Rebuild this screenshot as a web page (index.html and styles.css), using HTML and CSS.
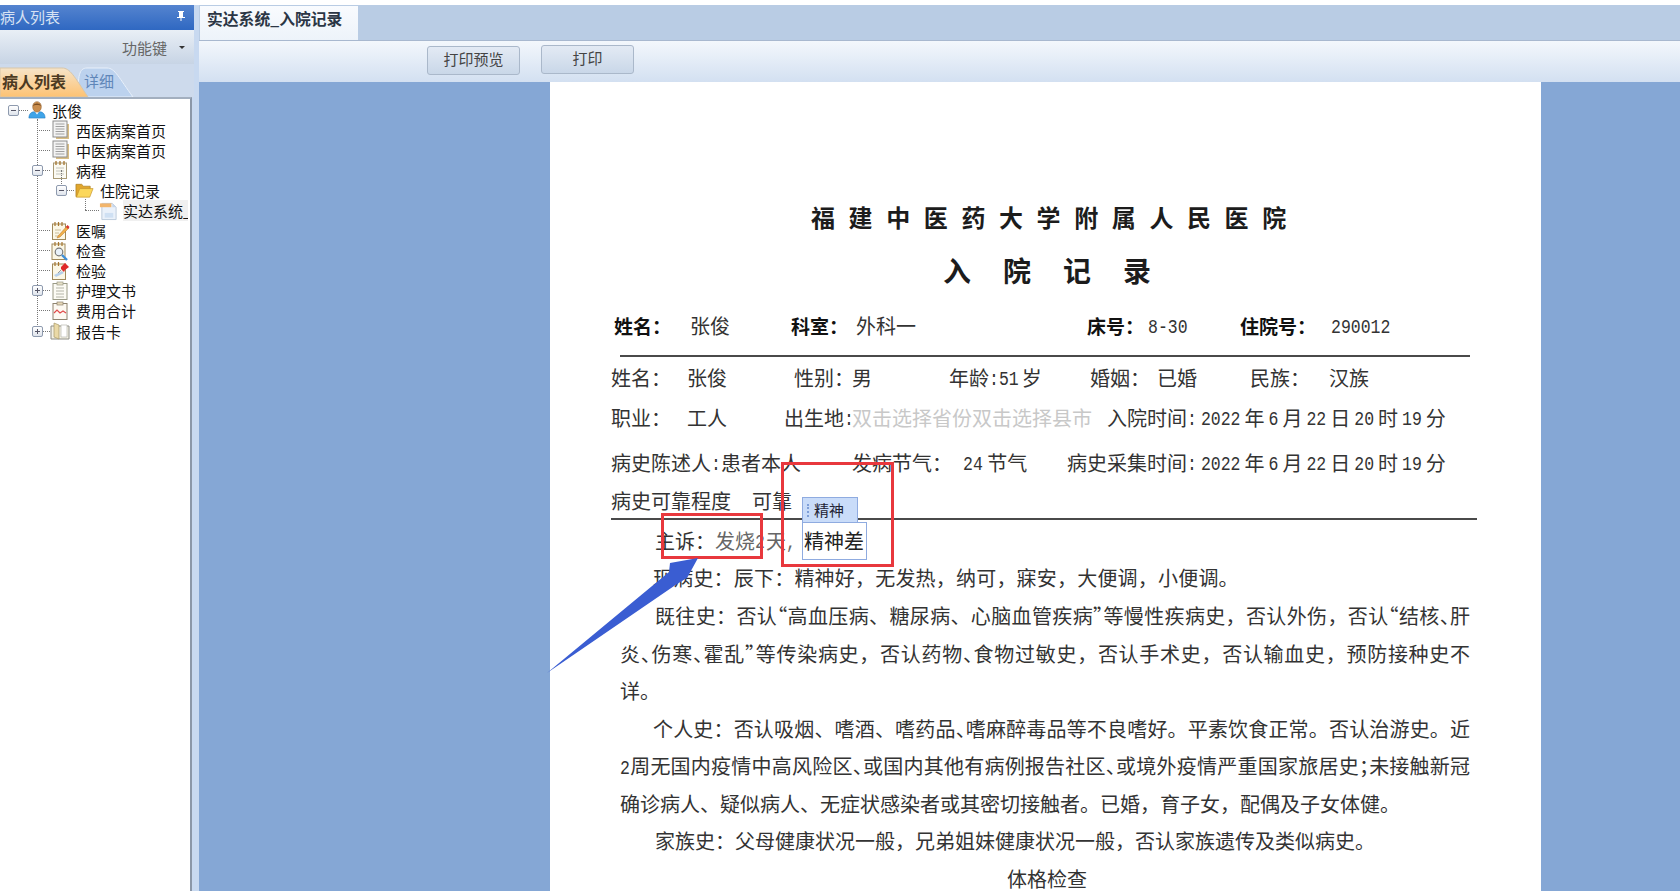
FILE: index.html
```html
<!DOCTYPE html>
<html lang="zh-CN">
<head>
<meta charset="utf-8">
<title>实达系统_入院记录</title>
<link rel="stylesheet" href="styles.css">
</head>
<body>
<svg class="defs" width="0" height="0" aria-hidden="true">
  <symbol id="i-user" viewBox="0 0 20 20">
    <path d="M1 19c0-5 3-7 6-7l3 2 3-2c3 0 6 2 6 7z" fill="#3fa4e8" stroke="#1f78c0" stroke-width=".6"/>
    <path d="M8 12.500h4l-2 2.500z" fill="#fff"/>
    <ellipse cx="10" cy="6.500" rx="4.800" ry="5.800" fill="#c98d4e" stroke="#8f5f2b" stroke-width=".6"/>
    <path d="M5.200 5.500c1-3.800 8.600-3.800 9.600 0-2-1.500-7.600-1.500-9.600 0z" fill="#7c4f22"/>
  </symbol>
  <symbol id="i-doc" viewBox="0 0 20 20">
    <path d="M7 4h12v15H6v-2h1z" fill="#d8bd84"/>
    <rect x="3" y="1" width="14" height="16" fill="#f3f3f3" stroke="#8d8d8d"/>
    <path d="M5.500 4h9M5.500 6.500h9M5.500 9h9M5.500 11.500h9M5.500 14h9" stroke="#a0a0a0"/>
  </symbol>
  <symbol id="i-note" viewBox="0 0 20 20">
    <rect x="3.500" y="3" width="13" height="15.500" fill="#fbfaf2" stroke="#a89a76"/>
    <path d="M6 1v4M10 1v4M14 1v4" stroke="#a5752e" stroke-width="1.300"/>
    <path d="M6 8h8M6 11h8M6 14h8" stroke="#c4c4bc"/>
  </symbol>
  <symbol id="i-folder" viewBox="0 0 20 20">
    <path d="M1 17V4h6l2 2h7v3H6L2 17z" fill="#e1a62d" stroke="#a87a1c" stroke-width=".7"/>
    <path d="M1.500 17.500l3.500-9h14l-3.500 9z" fill="#fbd75b" stroke="#c6942a" stroke-width=".7"/>
  </symbol>
  <symbol id="i-rec" viewBox="0 0 20 20">
    <path d="M3 2h11l4 4v13H3z" fill="#eaf1fa" stroke="#bcc9da"/>
    <path d="M14 2v4h4z" fill="#c6d6ea"/>
    <rect x="1" y="2" width="12" height="4" fill="#f2b56b"/>
    <path d="M6 12h9v5H6z" fill="#cfe0f3"/>
  </symbol>
  <symbol id="i-order" viewBox="0 0 20 20">
    <rect x="2.500" y="3" width="13" height="15.500" fill="#fbf7e6" stroke="#a08a5c"/>
    <path d="M5 1v4M8.500 1v4M12 1v4" stroke="#a5752e" stroke-width="1.200"/>
    <path d="M5 9h6M5 12h4M5 15h5" stroke="#c9bd9a"/>
    <path d="M8 15l9-10 2 2-9 9-3 1z" fill="#f0b04a" stroke="#b8752a" stroke-width=".5"/>
    <path d="M16 6l1.500-2 2 2-1.500 2z" fill="#d8332f"/>
  </symbol>
  <symbol id="i-check" viewBox="0 0 20 20">
    <rect x="2" y="3" width="13" height="15.500" fill="#fbf7e6" stroke="#a08a5c"/>
    <path d="M5 1v4M8.500 1v4M12 1v4" stroke="#a5752e" stroke-width="1.200"/>
    <circle cx="9" cy="11" r="3.800" fill="#e9f2fa" stroke="#777" stroke-width="1.200"/>
    <path d="M12 14l5 5" stroke="#3f8fd8" stroke-width="2.400"/>
  </symbol>
  <symbol id="i-test" viewBox="0 0 20 20">
    <rect x="2.500" y="3" width="13" height="15.500" fill="#fbf7e6" stroke="#a08a5c"/>
    <path d="M5 1v4M8.500 1v4" stroke="#a5752e" stroke-width="1.200"/>
    <path d="M4 14l8-4 2 2-8 4z" fill="#b7d0ea"/>
    <path d="M11 6l4-4 4 4-4 3-1 2-3-3z" fill="#df2a2a"/>
    <path d="M11 9l-3 3" stroke="#999"/>
  </symbol>
  <symbol id="i-clip" viewBox="0 0 20 20">
    <rect x="3" y="2.500" width="14" height="16" fill="#fcfbf4" stroke="#9a9a86"/>
    <rect x="7" y="1" width="6" height="3" fill="#e6e0c8" stroke="#9a9a86" stroke-width=".7"/>
    <path d="M6 7h8M6 10h8M6 13h8M6 16h8" stroke="#b4b4a8"/>
  </symbol>
  <symbol id="i-cost" viewBox="0 0 20 20">
    <rect x="3" y="2.500" width="14" height="16" fill="#fdf9f2" stroke="#8f8470"/>
    <rect x="7" y="1" width="6" height="3" fill="#e6d8b8" stroke="#8f8470" stroke-width=".7"/>
    <path d="M4 12l3-3 3 3 3-2 3 2" fill="none" stroke="#e04a4a" stroke-width="1.200"/>
  </symbol>
  <symbol id="i-book" viewBox="0 0 20 20">
    <path d="M1 5h18v13H1z" fill="#f4f1e4" stroke="#8e8e86"/>
    <path d="M4 2l5 2v14l-5-2z" fill="#ead9a6" stroke="#a89a6a" stroke-width=".7"/>
    <path d="M11 4h6v12h-6z" fill="#fff" stroke="#b8b8b0" stroke-width=".7"/>
  </symbol>
</svg>

<div class="app">
  <aside class="side">
    <div class="side-head">
      <span class="side-title">病人列表</span>
      <svg class="pin" width="12" height="12" viewBox="0 0 12 12"><path d="M3 1h6v1H8v5h2v1H6.500v3h-1V8H2V7h2V2H3z" fill="#fff"/></svg>
    </div>
    <div class="side-tools">
      <span class="tools-label">功能键</span>
      <span class="caret"></span>
    </div>
    <div class="side-tabs">
      <div class="stab stab-on">
        <svg class="stab-shape" width="90" height="33" viewBox="0 0 90 33"><defs><linearGradient id="tab-on" x1="0" y1="0" x2="0" y2="1"><stop offset="0" stop-color="#f6e4c8"/><stop offset="1" stop-color="#fdc273"/></linearGradient></defs><path d="M0 33V4h62c8 0 12 8 26 29z" fill="url(#tab-on)" stroke="#d8c6a8"/></svg>
        <span class="stab-text">病人列表</span>
      </div>
      <div class="stab stab-off">
        <svg class="stab-shape" width="62" height="33" viewBox="0 0 62 33"><path d="M1 33C1 12 2 4 10 4h20c8 0 12 10 26 29z" fill="#bcd2ee" stroke="#e8f0fa"/></svg>
        <span class="stab-text">详细</span>
      </div>
    </div>
    <div class="tree-wrap">
      <div class="tree">
        <div class="tree-row root">
          <span class="exp"><i class="minus"></i></span><span class="link link-root"></span>
          <svg class="ico ico-user"><use href="#i-user"/></svg><span class="lab lab-root">张俊</span>
        </div>
        <div class="tree-row l1"><span class="link"></span><svg class="ico"><use href="#i-doc"/></svg><span class="lab">西医病案首页</span></div>
        <div class="tree-row l1"><span class="link"></span><svg class="ico"><use href="#i-doc"/></svg><span class="lab">中医病案首页</span></div>
        <div class="tree-row l1"><span class="link"><span class="exp exp-over"><i class="minus"></i></span></span><svg class="ico"><use href="#i-note"/></svg><span class="lab">病程</span></div>
        <div class="tree-row l2"><span class="link"><span class="exp exp-over"><i class="minus"></i></span></span><svg class="ico"><use href="#i-folder"/></svg><span class="lab lab-l2">住院记录</span></div>
        <div class="tree-row l3"><span class="link"></span><svg class="ico"><use href="#i-rec"/></svg><span class="lab lab-sel">实达系统_入院记录</span></div>
        <div class="tree-row l1"><span class="link"></span><svg class="ico"><use href="#i-order"/></svg><span class="lab">医嘱</span></div>
        <div class="tree-row l1"><span class="link"></span><svg class="ico"><use href="#i-check"/></svg><span class="lab">检查</span></div>
        <div class="tree-row l1"><span class="link"></span><svg class="ico"><use href="#i-test"/></svg><span class="lab">检验</span></div>
        <div class="tree-row l1"><span class="link"><span class="exp exp-over"><i class="minus"></i><i class="plus"></i></span></span><svg class="ico"><use href="#i-clip"/></svg><span class="lab">护理文书</span></div>
        <div class="tree-row l1"><span class="link"></span><svg class="ico"><use href="#i-cost"/></svg><span class="lab">费用合计</span></div>
        <div class="tree-row l1"><span class="link"><span class="exp exp-over"><i class="minus"></i><i class="plus"></i></span></span><svg class="ico"><use href="#i-book"/></svg><span class="lab">报告卡</span></div>
      </div>
    </div>
  </aside>

  <main class="main">
    <div class="main-tabs"><div class="main-tab">实达系统_入院记录</div></div>
    <div class="main-tools">
      <button class="btn btn-preview">打印预览</button>
      <button class="btn btn-print">打印</button>
    </div>
    <div class="stage">
      <article class="page">
        <h1 class="t1">福建中医药大学附属人民医院</h1>
        <h2 class="t2">入院记录</h2>

        <div class="r r-head">
          <b class="w76">姓名：</b><span class="w101">张俊</span>
          <b class="w65">科室：</b><span class="w231">外科一</span>
          <b class="w61">床号：</b><span class="w92"><span class="m">8-30</span></span>
          <b class="w91">住院号：</b><span><span class="m">290012</span></span>
        </div>
        <div class="rule rule-a"></div>

        <div class="r mt2">
          <span class="w76">姓名：</span><span class="w107">张俊</span>
          <span class="w58">性别：</span><span class="w97">男</span>
          <span class="w141">年龄<span class="m age">:51</span>岁</span>
          <span class="w67">婚姻：</span><span class="w93">已婚</span>
          <span class="w79">民族：</span><span>汉族</span>
        </div>
        <div class="r mt4">
          <span class="w76">职业：</span><span class="w97">工人</span>
          <span class="w68">出生地<span class="m">:</span></span><span class="w255 hint">双击选择省份双击选择县市</span>
          <span>入院时间<span class="m">:</span><span class="m n">2022</span>年<span class="m n">6</span>月<span class="m n">22</span>日<span class="m n">20</span>时<span class="m n">19</span>分</span>
        </div>
        <div class="r mt9">
          <span class="w241">病史陈述人<span class="m">:</span>患者本人</span>
          <span class="w111">发病节气：</span><span class="w104"><span class="m">24</span> 节气</span>
          <span>病史采集时间<span class="m">:</span><span class="m n">2022</span>年<span class="m n">6</span>月<span class="m n">22</span>日<span class="m n">20</span>时<span class="m n">19</span>分</span>
        </div>
        <div class="r mt2">
          <span class="w141">病史可靠程度</span><span>可靠</span>
        </div>
        <div class="rule rule-b"></div>

        <div class="r mt2 ind44">主诉：<span class="soft">发烧<span class="m n-sm">2</span>天<span class="m">,</span></span></div>
        <div class="r mt1 ind42 airy">现病史：辰下：精神好，无发热，纳可，寐安，大便调，小便调。</div>

        <div class="body">
          <p class="j ind-35">既往史：否认<span class="h">“</span>高血压病、糖尿病、心脑血管疾病<span class="h">”</span>等慢性疾病史，否认外伤，否认<span class="h">“</span>结核<span class="h">、</span>肝</p>
          <p class="j">炎<span class="h">、</span>伤寒<span class="h">、</span>霍乱<span class="h">”</span>等传染病史，否认药物<span class="h">、</span>食物过敏史，否认手术史，否认输血史，预防接种史不</p>
          <p>详。</p>
          <p class="j ind-33">个人史：否认吸烟、嗜酒、嗜药品<span class="h">、</span>嗜麻醉毒品等不良嗜好。平素饮食正常。否认治游史。近</p>
          <p class="j"><span class="m">2</span>周无国内疫情中高风险区<span class="h">、</span>或国内其他有病例报告社区<span class="h">、</span>或境外疫情严重国家旅居史<span class="h">；</span>未接触新冠</p>
          <p>确诊病人、疑似病人、无症状感染者或其密切接触者。已婚，育子女，配偶及子女体健。</p>
          <p class="ind-35">家族史：父母健康状况一般，兄弟姐妹健康状况一般，否认家族遗传及类似病史。</p>
          <p class="ind-387">体格检查</p>
        </div>
      </article>
    </div>
  </main>

  <div class="popup">
    <div class="popup-tag"><i class="grip"></i>精神</div>
    <div class="popup-box">精神差</div>
  </div>
  <div class="mark mark-a"></div>
  <div class="mark mark-b"></div>
  <svg class="arrow" width="160" height="125" viewBox="0 0 160 125"><polygon points="0,124 122,23 123,14 151,9 140,29 130,35" fill="#3a5dd2"/></svg>
</div>
</body>
</html>
```

FILE: styles.css
```css
* { box-sizing: border-box; }
html, body { margin: 0; padding: 0; height: 100%; overflow: hidden; background: #fff; }
body { font-family: "Noto Sans CJK SC", "Liberation Sans", sans-serif; color: #222; }
.defs { position: absolute; }

.app { position: relative; display: flex; height: 891px; padding-top: 5px; }

/* left panel */
.side { width: 199px; flex: none; display: flex; flex-direction: column; background: #c8d9f0; }
.side-head { height: 25px; flex: none; display: flex; align-items: center; justify-content: space-between; padding: 0 7px 3px 0; width: 194px; background: linear-gradient(#5584cf, #2f68c2); }
.side-title { font-size: 15px; color: #d7e2f3; }
.pin { display: block; }
.side-tools { height: 34px; flex: none; width: 194px; display: flex; align-items: center; justify-content: flex-end; padding-right: 9px; gap: 12px; background: linear-gradient(#e9eff6, #c7d4e5); }
.tools-label { font-size: 15px; color: #666; }
.caret { width: 0; height: 0; border-left: 3.500px solid transparent; border-right: 3.500px solid transparent; border-top: 3.500px solid #333; }
.side-tabs { height: 33px; flex: none; width: 194px; display: flex; background: #cddaec; }
.stab { position: relative; height: 33px; display: flex; align-items: center; }
.stab-shape { position: absolute; left: 0; top: 0; }
.stab-text { position: relative; }
.stab-on { width: 77px; z-index: 1; }
.stab-on .stab-text { font-size: 16px; font-weight: 700; color: #4b3a22; padding-left: 2px; }
.stab-off { width: 62px; }
.stab-off .stab-text { font-size: 15px; color: #5f86b8; padding-left: 7px; }

.tree-wrap { flex: 1; width: 192px; background: #fff; border-right: 2px solid #8b97a8; border-top: 2px solid #a3afbf; overflow: hidden; }
.tree { position: relative; padding-top: 1px; }
.tree::before { content: ""; position: absolute; left: 37px; top: 20px; height: 212px; border-left: 1px dotted #777; }
.tree-row { position: relative; display: flex; align-items: center; height: 20.100px; font-size: 15px; color: #111; white-space: nowrap; }
.root { padding-left: 8px; }
.l1 { padding-left: 37px; }
.l2 { padding-left: 61px; }
.l3 { padding-left: 85px; }
.l2::before { content: ""; position: absolute; left: 61px; top: -10px; height: 20px; border-left: 1px dotted #777; }
.l3::before { content: ""; position: absolute; left: 85px; top: -1px; height: 11px; border-left: 1px dotted #777; }
.link { position: relative; flex: none; width: 13px; height: 1px; border-top: 1px dotted #777; }
.link-root { width: 9px; }
.l3 .link { width: 14px; }
.exp { position: relative; flex: none; width: 11px; height: 11px; border: 1px solid #8e9aae; border-radius: 2px; background: linear-gradient(#fff, #dfe4ec); }
.exp-over { position: absolute; left: -5px; top: -6px; }
.minus, .plus { position: absolute; background: #556; }
.minus { left: 2px; top: 4px; width: 5px; height: 1px; }
.plus { left: 4px; top: 2px; width: 1px; height: 5px; }
.ico { flex: none; width: 20px; height: 20px; }
.ico-user { width: 18px; }
.lab { margin-left: 6px; }
.lab-root { margin-left: 6px; }
.lab-l2 { margin-left: 6px; }
.l2 .ico { margin-left: 1px; width: 19px; }
.l3 .ico { width: 19px; }
.lab-sel { margin-left: 5px; width: 65px; overflow: hidden; background: #f0f0f0; }

/* main area */
.main { flex: 1; min-width: 0; display: flex; flex-direction: column; }
.main-tabs { height: 35px; flex: none; padding: 1px 0 0 1px; background: #b9cce4; }
.main-tab { width: 158px; height: 34px; padding: 0 0 0 7px; font-size: 15.800px; font-weight: 700; color: #2b3645; line-height: 26px; background: linear-gradient(#f9fbfe, #edf3fa); }
.main-tools { height: 42px; flex: none; display: flex; align-items: flex-start; padding-top: 4px; border-top: 1px solid #a8b8cf; background: linear-gradient(#f3f7fc, #d3e0f1); }
.btn { width: 93px; height: 29px; padding: 0 0 5px; border: 1px solid #aab8ca; border-radius: 3px; background: linear-gradient(#e3eaf4, #c9d7e8); font-family: inherit; font-size: 15px; color: #444; }
.btn-preview { margin-left: 228px; margin-top: 1px; }
.btn-print { margin-left: 21px; }
.stage { flex: 1; min-height: 0; padding-left: 351px; background: #85a7d5; overflow: hidden; }

/* record page */
.page { width: 991px; height: 100%; padding: 118px 0 0 61px; background: #fff; overflow: hidden; font-size: 20px; color: #333; }
.t1 { margin: 0 0 0 200px; height: 34px; line-height: 34px; font-size: 24px; font-weight: 700; letter-spacing: 13.600px; white-space: nowrap; color: #1c1c1c; }
.t2 { margin: 16px 0 0 332px; height: 40px; line-height: 40px; font-size: 28px; font-weight: 700; letter-spacing: 32px; white-space: nowrap; color: #1c1c1c; }
.r { display: flex; align-items: center; height: 36px; white-space: nowrap; }
.r > * { flex: none; }
.r-head { height: 30px; margin-top: 20px; padding-left: 3px; }
.r-head b { font-size: 19px; font-weight: 700; color: #111; }
.rule { height: 2px; background: #4a4a4a; }
.rule-a { width: 850px; margin: 15px 0 0 9px; }
.rule-b { width: 866px; margin-top: 0; }
.mt1 { margin-top: 1px; }
.mt2 { margin-top: 2px; }
.mt4 { margin-top: 4px; }
.mt9 { margin-top: 9px; }
.ind44 { padding-left: 44px; }
.ind42 { padding-left: 42px; }
.airy { letter-spacing: .2px; }
.w58 { width: 58px; } .w61 { width: 61px; } .w65 { width: 65px; } .w67 { width: 67px; }
.w68 { width: 68px; } .w76 { width: 76px; } .w79 { width: 79px; } .w91 { width: 91px; }
.w92 { width: 92px; } .w93 { width: 93px; } .w97 { width: 97px; } .w101 { width: 101px; }
.w104 { width: 104px; } .w107 { width: 107px; } .w111 { width: 111px; } .w141 { width: 141px; }
.w231 { width: 231px; } .w241 { width: 241px; } .w255 { width: 255px; }
.m { display: inline-block; vertical-align: 1.500px; font-family: "Liberation Mono", monospace; font-size: 16.500px; line-height: 1; transform: scaleY(1.2); }
.n { margin: 0 4px; }
.n-sm { margin: 0 1px 0 0; }
.age { margin-right: 3px; }
.h { font-feature-settings: "halt"; }
.hint { color: #c8c8c8; }
.soft { color: #666; }
.body { margin: 2px 0 0 9px; width: 850px; line-height: 37.500px; }
.body p { margin: 0; height: 37.500px; white-space: nowrap; }
.body .j { text-align: justify; text-align-last: justify; white-space: normal; }
.ind-33 { padding-left: 33px; }
.ind-35 { padding-left: 35px; }
.ind-387 { padding-left: 387px; }

/* overlays */
.popup { position: absolute; left: 802px; top: 497px; font-size: 20px; color: #222; }
.popup-tag { position: relative; width: 56px; height: 25px; padding-left: 11px; font-size: 15px; line-height: 24px; color: #223; background: #c9dcf9; border: 1px solid #8fabe0; border-bottom: 0; }
.grip { position: absolute; left: 4px; top: 6px; width: 2px; height: 13px; border-left: 2px dotted #7f9fd8; }
.popup-box { width: 65px; height: 38px; line-height: 35px; padding-left: 1px; background: #fff; border: 1px solid #8fabe0; white-space: nowrap; }
.mark { position: absolute; border: 3px solid #e8383d; }
.mark-a { left: 661px; top: 513px; width: 102px; height: 46px; }
.mark-b { left: 781px; top: 462px; width: 113px; height: 105px; }
.arrow { position: absolute; left: 547px; top: 549px; }
```
